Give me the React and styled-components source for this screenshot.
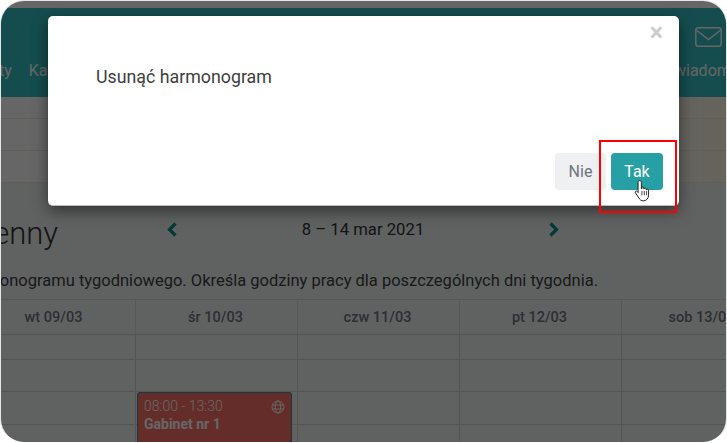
import React from "react";
import styled, { createGlobalStyle } from "styled-components";

const Global = createGlobalStyle`
  html, body { margin: 0; padding: 0; background: #fff; }
  body { font-family: Roboto, "Liberation Sans", sans-serif; }
  * { box-sizing: border-box; }
`;

const Frame = styled.div`
  position: relative;
  width: 727px;
  height: 443px;
  overflow: hidden;
  border-radius: 24px;
  background: #f1f5f5;
  border: 1px solid #e6e6e6;
  border-bottom: 1px solid #fff;
`;

const TopStrip = styled.div`height: 7px; background: #fff;`;

const Header = styled.header`
  height: 89px;
  background: #35c0c4;
  display: flex;
  align-items: flex-start;
  justify-content: space-between;
  color: #fff;
  font-size: 16px;
`;

const NavLeft = styled.nav`
  display: flex;
  gap: 17px;
  padding-top: 54px;
  margin-left: -2px;
`;

const NavItem = styled.span`line-height: 18px;`;

const NavRight = styled.div`
  width: 47px;
  display: flex;
  flex-direction: column;
  gap: 15px;
  padding-top: 19px;
  white-space: nowrap;
`;

const MailIcon = styled.svg`
  width: 27px;
  height: 20px;
  margin-left: 16px;
  display: block;
`;

const MailLabel = styled(NavItem)`margin-left: -5px;`;

const Band = styled.div`
  height: ${(p) => p.$h}px;
  background: linear-gradient(90deg, #fff 0%, #fff 60%, #fff8e8 100%);
  border-bottom: 1px solid #f2ead6;
`;

const Toolbar = styled.div`
  display: grid;
  grid-template-columns: 57px 1fr;
  margin-top: 30px;
  height: 43px;
  align-items: center;
`;

const TitleClip = styled.h1`
  margin: 0;
  display: flex;
  justify-content: flex-end;
  overflow: hidden;
  white-space: nowrap;
  font-size: 31px;
  font-weight: 300;
  color: #333;
  line-height: 36px;
  padding-bottom: 1px;
`;

const WeekNav = styled.div`
  display: flex;
  align-items: center;
  margin-left: 108px;
  width: 394px;
  justify-content: space-between;
  margin-top: -11px;
`;

const WeekLabel = styled.span`
  font-size: 16.7px;
  color: #333;
`;

const Chevron = styled.svg`
  width: 12px;
  height: 15px;
  display: block;
`;

const Lead = styled.div`
  display: flex;
  justify-content: flex-end;
  width: 597px;
  overflow: hidden;
  white-space: nowrap;
  font-size: 16.5px;
  line-height: 20px;
  color: #404040;
  margin-top: 15px;
`;

const Table = styled.div`
  margin: 8px 0 0 -27px;
  display: grid;
  grid-template-columns: repeat(5, 162px);
  grid-template-rows: 35px 25px 32px 33px 40px;
  width: 810px;
  border-top: 1px solid #d9dcdc;
`;

const HeadCell = styled.div`
  display: flex;
  align-items: center;
  justify-content: center;
  font-size: 14.5px;
  font-weight: 500;
  color: #6e7780;
  padding-right: 2px;
  border-right: 1px solid #d9dcdc;
  border-bottom: 1px solid #cfd2d2;
  white-space: nowrap;
`;

const Cell = styled.div`
  position: relative;
  border-right: 1px solid #cfd2d2;
  border-bottom: 1px solid #cfd2d2;
`;

const EventCard = styled.div`
  position: absolute;
  left: 1px;
  top: 0;
  width: 155px;
  height: 60px;
  background: #fd7268;
  border: 1px solid #3b8ea8;
  border-bottom: 0;
  border-radius: 3px 3px 0 0;
  padding: 5px 6px;
  color: #fff;
  font-size: 14px;
  line-height: 17px;
  z-index: 1;
`;

const EventTime = styled.div`
  display: flex;
  justify-content: space-between;
  align-items: center;
  font-weight: 300;
`;

const EventName = styled.div`font-weight: 700; margin-top: 1px;`;

const Backdrop = styled.div`
  position: absolute;
  inset: 0;
  background: rgba(0, 0, 0, 0.6);
  z-index: 5;
`;

const Modal = styled.div`
  position: absolute;
  left: 47px;
  top: 15px;
  width: 631px;
  height: 190px;
  background: #fff;
  border-radius: 5px;
  border-bottom: 1px solid #bbb;
  box-shadow: 0 5px 15px rgba(0, 0, 0, 0.5);
  z-index: 6;
  display: flex;
  flex-direction: column;
  padding: 0 16px 15px 48px;
`;

const CloseRow = styled.div`
  display: flex;
  justify-content: flex-end;
  height: 50px;
  padding-top: 5px;
`;

const Close = styled.span`
  font-size: 25px;
  font-weight: 700;
  line-height: 24px;
  color: #ccc;
`;

const Message = styled.p`
  margin: 0;
  font-size: 17.8px;
  line-height: 22px;
  color: #3e3e3e;
`;

const Actions = styled.div`
  margin-top: auto;
  display: flex;
  justify-content: flex-end;
  gap: 5px;
`;

const Button = styled.button`
  width: ${(p) => p.$w}px;
  height: 37px;
  border: 0;
  border-radius: 4px;
  font-family: inherit;
  font-size: 16px;
  background: ${(p) => (p.$primary ? "#26a0a5" : "#eff0f1")};
  color: ${(p) => (p.$primary ? "#fff" : "#6c757d")};
`;

const Highlight = styled.div`
  position: absolute;
  left: 598px;
  top: 139px;
  width: 78px;
  height: 73px;
  border: 2px solid #f00;
  z-index: 7;
`;

const Cursor = styled.svg`
  position: absolute;
  left: 632px;
  top: 178px;
  width: 20px;
  height: 24px;
  z-index: 8;
`;

const days = ["wt 09/03", "śr 10/03", "czw 11/03", "pt 12/03", "sob 13/03"];

export default function App() {
  return (
    <Frame>
      <Global />
      <TopStrip />
      <Header>
        <NavLeft>
          <NavItem>ty</NavItem>
          <NavItem>Ka</NavItem>
        </NavLeft>
        <NavRight>
          <MailIcon viewBox="0 0 27 20" fill="none" stroke="#fff" strokeWidth="1.5">
            <rect x=".8" y=".8" width="25.4" height="18.400" rx="2.5" />
            <path d="M1.2 3 13.500 12.500 25.800 3" />
          </MailIcon>
          <MailLabel>wiadomości</MailLabel>
        </NavRight>
      </Header>
      <Band $h={22} />
      <Band $h={32} />
      <Band $h={32} />
      <Toolbar>
        <TitleClip>Tygodniowy i dzienny</TitleClip>
        <WeekNav>
          <Chevron viewBox="0 0 12 15"><path d="M9.500 1.500 3.500 7.500 9.500 13.500" fill="none" stroke="#0b8f8f" strokeWidth="3.200" /></Chevron>
          <WeekLabel>8 – 14 mar 2021</WeekLabel>
          <Chevron viewBox="0 0 12 15"><path d="M2.500 1.500 8.500 7.500 2.500 13.500" fill="none" stroke="#0b8f8f" strokeWidth="3.200" /></Chevron>
        </WeekNav>
      </Toolbar>
      <Lead>To ustawienia harmonogramu tygodniowego. Określa godziny pracy dla poszczególnych dni tygodnia.</Lead>
      <Table>
        {days.map((d) => <HeadCell key={d}>{d}</HeadCell>)}
        {Array.from({ length: 20 }, (_, i) => (
          <Cell key={i}>
            {i === 11 && (
              <EventCard>
                <EventTime>
                  08:00 - 13:30
                  <svg width="14" height="14" viewBox="0 0 14 14" fill="none" stroke="#fff" strokeWidth="1">
                    <circle cx="7" cy="7" r="6" />
                    <ellipse cx="7" cy="7" rx="2.800" ry="6" />
                    <path d="M1.300 5h11.400M1.300 9h11.400" />
                  </svg>
                </EventTime>
                <EventName>Gabinet nr 1</EventName>
              </EventCard>
            )}
          </Cell>
        ))}
      </Table>
      <Backdrop />
      <Modal>
        <CloseRow><Close>×</Close></CloseRow>
        <Message>Usunąć harmonogram</Message>
        <Actions>
          <Button $w={51}>Nie</Button>
          <Button $w={52} $primary>Tak</Button>
        </Actions>
      </Modal>
      <Highlight />
      <Cursor viewBox="0 0 18 22">
        <path d="M6 1.500c.9 0 1.500.6 1.500 1.500v6l.5-.1V8c0-1 1.600-1 1.700 0v1l.5.1c0-1 1.700-1 1.700.1v.6l.5.1c.1-.9 1.700-.8 1.700.3v4.600c0 2.800-1.800 5.200-4.700 5.200H9.200c-2 0-3.100-1-4-2.600L2 12.600c-.7-1.200.8-2.200 1.700-1.200l.8 1V3c0-.9.6-1.500 1.500-1.500z" fill="#fff" stroke="#222" strokeWidth=".9" />
        <path d="M8 11v4M10.200 11v4M12.300 11v4" stroke="#333" strokeWidth=".8" fill="none" />
      </Cursor>
    </Frame>
  );
}
